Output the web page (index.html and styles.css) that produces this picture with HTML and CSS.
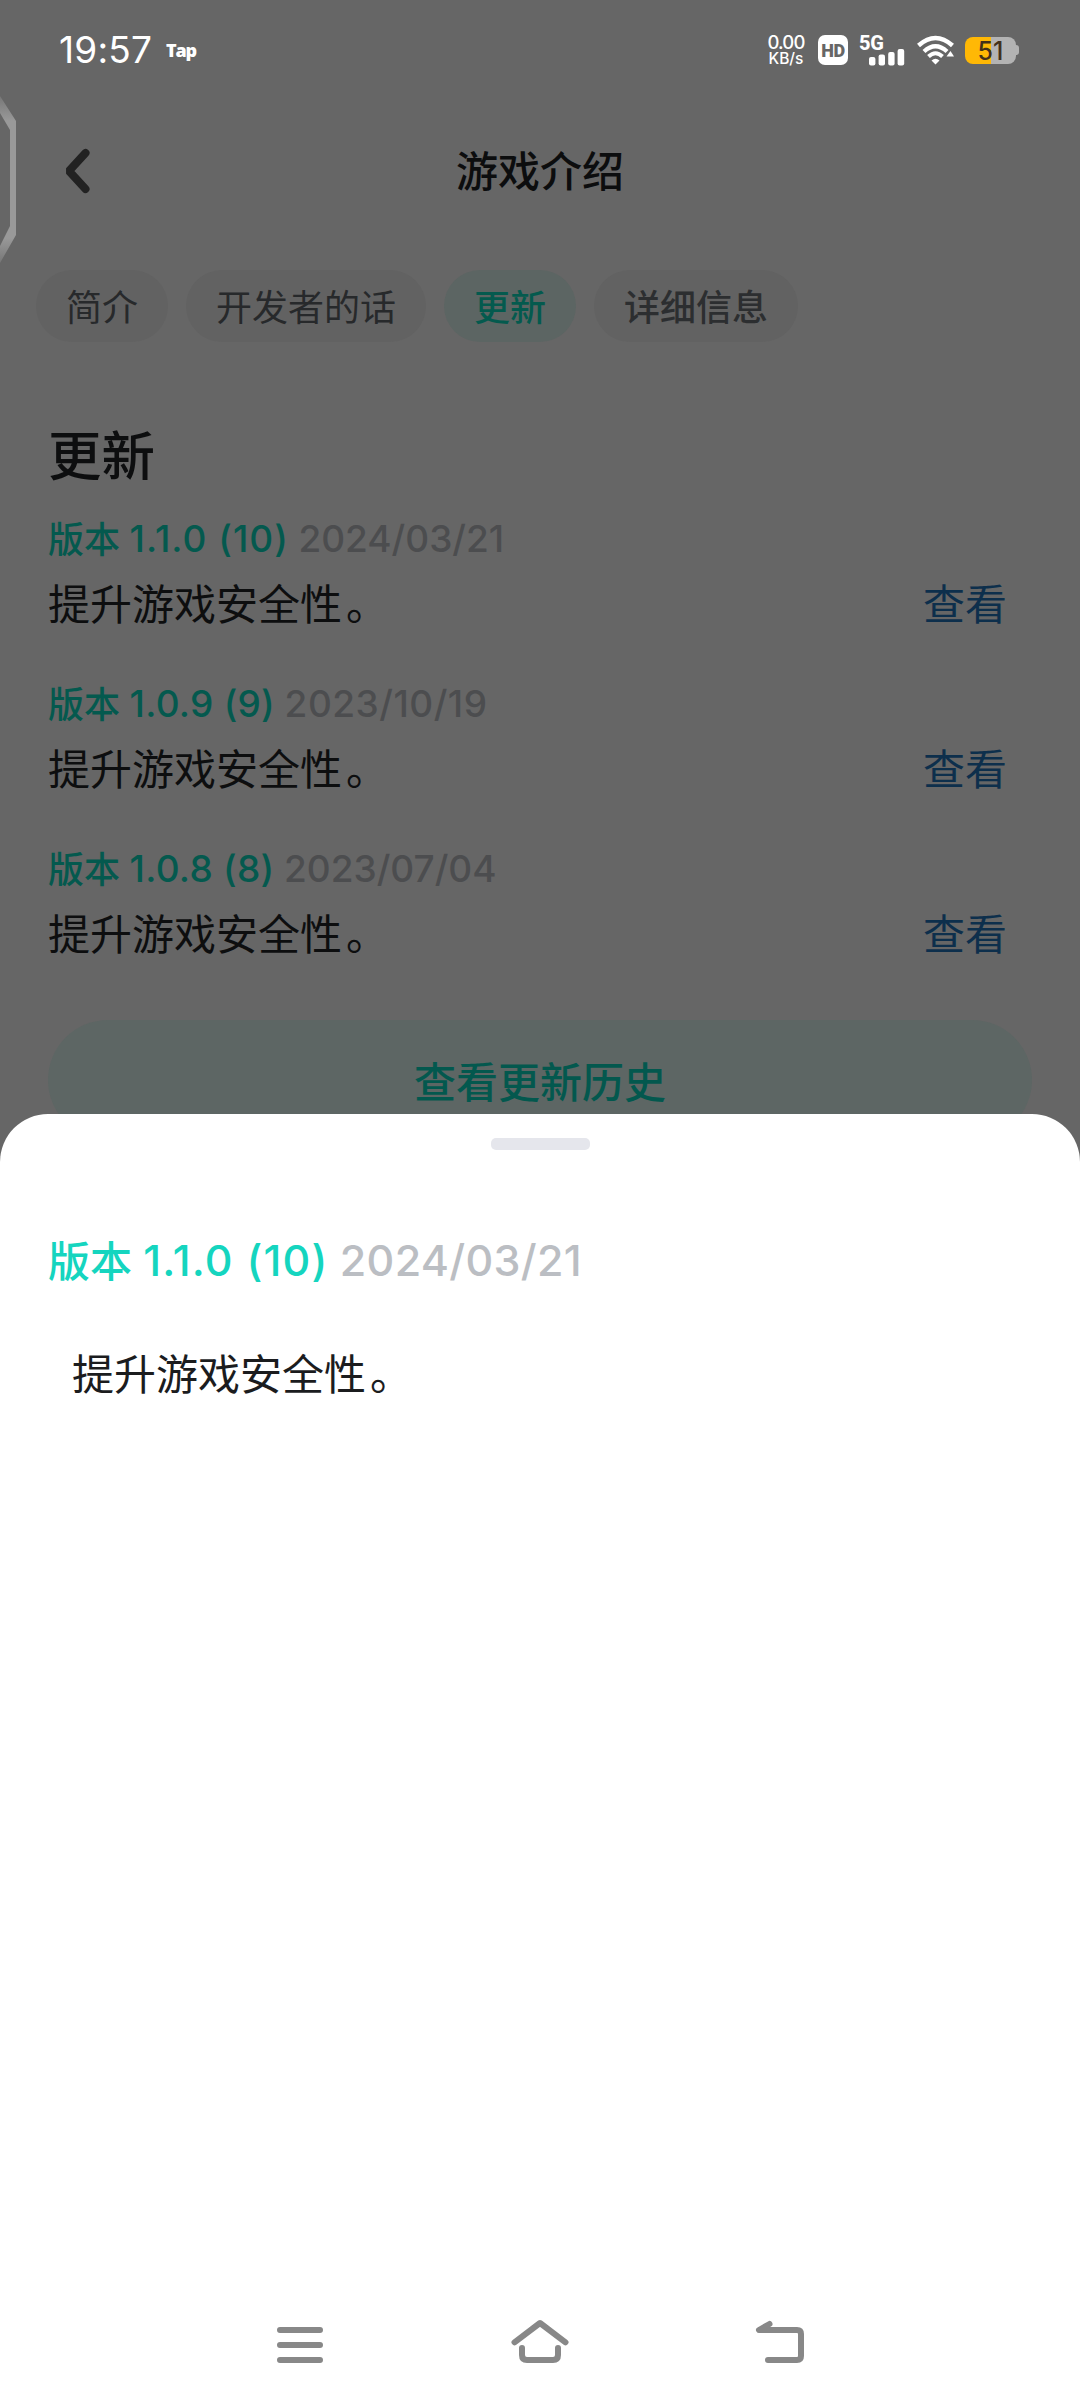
FILE: index.html
```html
<!DOCTYPE html>
<html lang="zh-CN">
<head>
<meta charset="utf-8">
<title>游戏介绍</title>
<link rel="stylesheet" href="styles.css">
</head>
<body>
<div class="screen">
  <header class="status">
    <span class="clock">19:57</span>
    <span class="tap">Tap</span>
    <span class="spacer"></span>
    <span class="speed"><span class="rate">0.00</span><span class="unit">KB/s</span></span>
    <span class="hd">HD</span>
    <span class="signal">
      <span class="net">5G</span>
      <svg class="bars" width="36" height="18" viewBox="0 0 36 18" fill="#fff">
        <rect x="0" y="9" width="6.4" height="8.6" rx="2"/><rect x="9.6" y="6.6" width="6.4" height="11" rx="2"/><rect x="19.2" y="4" width="6.4" height="13.6" rx="2"/><rect x="28.6" y="1" width="6.6" height="16.6" rx="2"/>
      </svg>
    </span>
    <svg class="wifi" width="38" height="30" viewBox="0 0 38 30" fill="none" stroke="#fff">
      <path d="M1.500 10.500Q18.500 -4.500 35.500 10.500" stroke-width="4.500"/>
      <path d="M7 16.500Q18.500 6 30 16.500" stroke-width="4.300"/>
      <path d="M11.500 21.500Q18.500 15 25.500 21.500" stroke-width="4"/>
      <path d="M14.500 25.500Q18.500 22 22.500 25.500L18.500 29.500Z" fill="#fff" stroke="none"/>
      <path d="M29.500 21.500L33.500 16L37 21.500Z" fill="#fff" stroke="none"/>
    </svg>
    <span class="battery"><span class="cell">51</span><span class="nub"></span></span>
  </header>

  <nav class="titlebar">
    <svg class="back" width="30" height="50" viewBox="0 0 30 50" fill="none" stroke="#222" stroke-width="8" stroke-linecap="round" stroke-linejoin="bevel"><path d="M23.500 7L7 25L23.500 43"/></svg>
    <h1 class="title">游戏介绍</h1>
  </nav>

  <div class="tabs">
    <span class="tab">简介</span>
    <span class="tab">开发者的话</span>
    <span class="tab tab-active">更新</span>
    <span class="tab tab-medium">详细信息</span>
  </div>

  <main class="updates">
    <h2 class="heading">更新</h2>
    <section class="item">
      <p class="version">版本 <span class="num num-loose">1.1.0 (10)</span> <span class="date">2024/03/21</span></p>
      <p class="desc"><span>提升游戏安全性<span class="stop">。</span></span><a class="view">查看</a></p>
    </section>
    <section class="item">
      <p class="version">版本 <span class="num">1.0.9 (9)</span> <span class="date date-loose">2023/10/19</span></p>
      <p class="desc"><span>提升游戏安全性<span class="stop">。</span></span><a class="view">查看</a></p>
    </section>
    <section class="item">
      <p class="version">版本 <span class="num">1.0.8 (8)</span> <span class="date">2023/07/04</span></p>
      <p class="desc"><span>提升游戏安全性<span class="stop">。</span></span><a class="view">查看</a></p>
    </section>
    <div class="history">查看更新历史</div>
  </main>

  <svg class="edge" width="18" height="172" viewBox="0 0 18 172">
    <defs><linearGradient id="fade" x1="0" y1="0" x2="0" y2="1"><stop offset="0" stop-color="#777"/><stop offset=".15" stop-color="#999"/><stop offset=".85" stop-color="#999"/><stop offset="1" stop-color="#777"/></linearGradient></defs>
    <path d="M0 2L16 27V141L0 169V152L10 132V36L0 19Z" fill="url(#fade)"/>
  </svg>

  <aside class="sheet">
    <div class="grip"></div>
    <p class="version sheet-version">版本 <span class="num num-loose">1.1.0 (10)</span> <span class="date">2024/03/21</span></p>
    <p class="sheet-desc">提升游戏安全性<span class="stop">。</span></p>
    <svg class="navkeys" width="600" height="60" viewBox="240 2313 600 60" fill="none" stroke="#888" stroke-width="6" stroke-linecap="round" stroke-linejoin="round">
      <path d="M280 2330H320M280 2345H320M280 2360H320"/>
      <path d="M514.500 2342.300L540 2323L565.500 2342.300M522 2348V2355Q522 2360 527 2360H553Q558 2360 558 2355V2348"/>
      <path d="M769.500 2324L759 2330H797Q801 2330 801 2334V2356Q801 2360 797 2360H768"/>
    </svg>
  </aside>
</div>
</body>
</html>
```
FILE: styles.css
```css
* { box-sizing: border-box; }
body { margin: 0; background: #666; font-family: Inter, "Noto Sans CJK SC", sans-serif; }
h1, h2, p { margin: 0; }
.screen { position: relative; width: 1080px; height: 2408px; overflow: hidden; background: #666; }

.status { display: flex; align-items: center; height: 98px; padding: 2px 61px 0 59px; color: #fff; }
.clock { font: 400 37px/44px Inter, sans-serif; letter-spacing: .2px; width: 107px; }
.tap { font: 800 18px/22px "Open Sans", sans-serif; letter-spacing: -1.2px; }
.spacer { flex: 1; }
.speed { display: flex; flex-direction: column; align-items: center; width: 38px; margin-right: 13px; font-weight: 500; }
.rate { font-size: 18.500px; line-height: 17px; letter-spacing: -.8px; }
.unit { font-size: 15.500px; line-height: 16px; }
.hd { width: 30px; height: 30px; margin-right: 11px; border-radius: 7px; background: #fff; color: #666; font-family: Roboto, sans-serif; font-size: 18px; font-weight: 900; line-height: 31px; text-align: center; letter-spacing: -.4px; }
.signal { display: flex; flex-direction: column; width: 46px; height: 31px; margin-right: 12px; }
.net { font-family: Roboto, sans-serif; font-size: 20px; font-weight: 800; line-height: 17px; height: 13px; letter-spacing: -.2px; }
.bars { margin-left: 10px; }
.wifi { margin-right: 10px; }
.battery { display: flex; align-items: center; }
.cell { width: 51px; height: 27px; border-radius: 8px; background: linear-gradient(90deg, #ffb805 51%, #b3b3b3 51%); color: #42301a; font-size: 25px; font-weight: 500; line-height: 28px; text-align: center; }
.nub { width: 3px; height: 10px; border-radius: 0 3px 3px 0; background: #b3b3b3; }

.titlebar { display: grid; grid-template-columns: 120px 1fr 120px; align-items: center; height: 144px; }
.back { margin: 2px 0 0 62px; }
.title { padding-top: 4px; font-size: 42px; font-weight: 500; line-height: 60px; text-align: center; color: #0c0d0e; }

.tabs { display: flex; gap: 18px; padding: 28px 36px 0; }
.tab { height: 72px; padding: 0 30px; border-radius: 36px; background: #626262; color: #27292b; font-size: 36px; line-height: 77px; }
.tab-active { background: #5c6563; color: #045a4e; font-weight: 500; }
.tab-medium { color: #2c2e30; font-weight: 500; }

.updates { padding: 79px 48px 0; }
.heading { margin-bottom: 20px; font-size: 53.500px; font-weight: 500; line-height: 72px; color: #0d0e0f; }
.item { height: 165px; }
.version { margin-bottom: 8px; font-size: 36px; font-weight: 500; line-height: 54px; height: 54px; color: #04594e; white-space: nowrap; }
.num, .date { font-size: 37px; vertical-align: 1px; line-height: 1; }
.num { letter-spacing: .25px; }
.num-loose { letter-spacing: 1px; }
.date { color: #4c4d4f; }
.date-loose { letter-spacing: .5px; }
.desc { display: flex; justify-content: space-between; padding-right: 25px; font-size: 42px; line-height: 60px; color: #0d0e0f; }
.stop { margin-left: 4px; }
.view { color: #0d2f4c; }
.history { height: 120px; margin-top: 12px; border-radius: 60px; background: #5d6664; color: #03584e; font-size: 42px; font-weight: 500; line-height: 125px; text-align: center; }

.edge { position: absolute; left: 0; top: 94px; }

.sheet { position: absolute; left: 0; right: 0; top: 1114px; bottom: 0; display: flex; flex-direction: column; padding: 24px 48px 35px; border-radius: 48px 48px 0 0; background: #fff; }
.grip { width: 99px; height: 12px; margin: 0 auto; border-radius: 5px; background: #e5e6ec; }
.sheet-version { margin: 82px 0 0; height: 60px; font-size: 42px; line-height: 60px; color: #15d5bf; }
.sheet-version .num { font-size: 43px; letter-spacing: 1.2px; }
.sheet-version .date { font-size: 43px; letter-spacing: .3px; color: #bbbec3; }
.sheet-desc { margin: 53px 0 0 24px; font-size: 42px; line-height: 60px; color: #1b1c1e; }
.navkeys { margin: auto auto 0; }
```
